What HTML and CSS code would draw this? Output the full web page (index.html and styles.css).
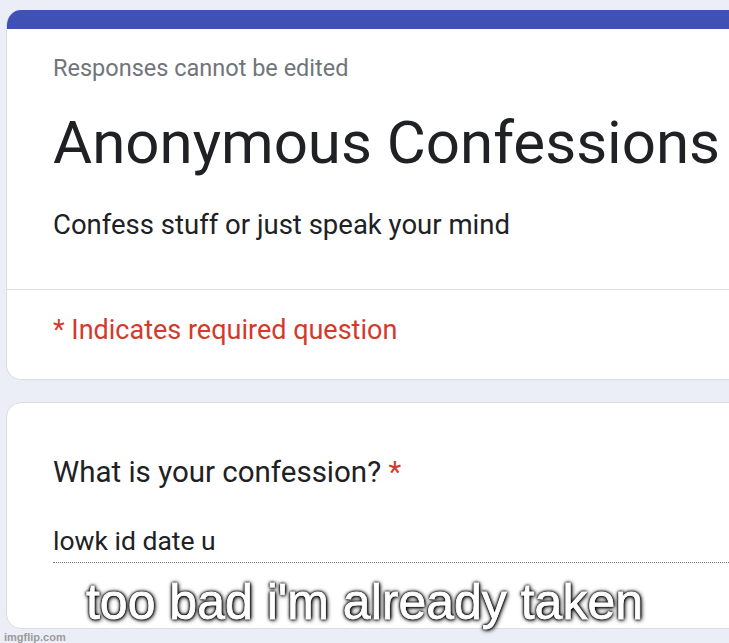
FILE: index.html
```html
<!DOCTYPE html>
<html lang="en">
<head>
    <meta charset="UTF-8">
    <meta name="viewport" content="width=device-width, initial-scale=1.0">
    <title>Anonymous Confessions</title>
    <link rel="stylesheet" href="styles.css">
</head>
<body>
    <div class="page">
        <!-- Kartu judul -->
        <div class="card header-card">
            <div class="top-bar"></div>
            <div class="header-body">
                <p class="notice">Responses cannot be edited</p>
                <h1>Anonymous Confessions</h1>
                <p class="desc">Confess stuff or just speak your mind</p>
            </div>
            <div class="required-note">* Indicates required question</div>
        </div>

        <!-- Kartu pertanyaan -->
        <div class="card question-card">
            <div class="question">What is your confession? <span class="star">*</span></div>
            <div class="answer">lowk id date u</div>
        </div>

        <div class="caption">too bad i'm already taken</div>
        <div class="watermark">imgflip.com</div>
    </div>
</body>
</html>
```

FILE: styles.css
```css
/* Tata letak umum */
body {
    margin: 0;
    background-color: #eceef7;
    font-family: Roboto, "Noto Sans", Arial, sans-serif;
    overflow: hidden;
}

.page {
    position: relative;
    width: 729px;
    height: 643px;
    padding: 10px 0 0 6px;
    box-sizing: border-box;
    overflow: hidden;
}

.card {
    width: 800px;
    background-color: #fff;
    border: 1px solid #dadce0;
    border-radius: 15px;
    box-sizing: border-box;
}

/* Kartu judul */
.header-card {
    border-top: none;
    overflow: hidden;
}

.top-bar {
    height: 19px;
    background-color: #3f51b5;
}

.header-body {
    padding: 21px 0 0 46px;
    height: 261px;
    box-sizing: border-box;
    border-bottom: 1px solid #dadce0;
}

.notice {
    margin: 0;
    font-size: 23.5px;
    line-height: 36px;
    color: #70757a;
}

h1 {
    margin: 17px 0 0;
    font-size: 60px;
    font-weight: 400;
    line-height: 80px;
    color: #202124;
    white-space: nowrap;
}

.desc {
    margin: 22px 0 0;
    font-size: 27.5px;
    line-height: 40px;
    color: #202124;
}

.required-note {
    padding: 24px 0 0 46px;
    height: 89px;
    box-sizing: border-box;
    font-size: 27px;
    line-height: 32px;
    color: #d33a2c;
}

/* Kartu pertanyaan */
.question-card {
    margin-top: 22px;
    height: 227px;
    padding: 51px 0 0 46px;
}

.question {
    font-size: 29.5px;
    line-height: 36px;
    color: #202124;
}

.star {
    color: #d33a2c;
}

.answer {
    margin-top: 33px;
    padding-bottom: 3px;
    font-size: 26.5px;
    line-height: 36px;
    color: #202124;
    border-bottom: 1px dotted #70757a;
}

/* Teks meme */
.caption {
    position: absolute;
    left: 0;
    right: 0;
    top: 573px;
    text-align: center;
    font-family: "Liberation Sans", Arial, sans-serif;
    font-size: 50px;
    color: #fff;
    -webkit-text-stroke: 0.8px #fff;
    text-shadow: 0 0 2px #000, 0 0 2px #000, 0 0 3px #000, 0 0 4px #000, 1px 1px 5px #000;
}

.watermark {
    position: absolute;
    left: 4px;
    bottom: 0;
    font-family: "Liberation Sans", Arial, sans-serif;
    font-size: 11px;
    font-weight: bold;
    color: #9a9a9a;
}
```
